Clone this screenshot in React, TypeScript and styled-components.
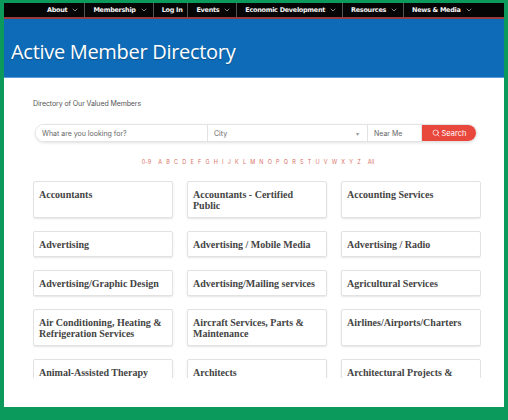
import React from "react"
import styled, { createGlobalStyle } from "styled-components"
import { ChevronDown, Search } from "lucide-react"

const navItems = [
  { label: "About", menu: true },
  { label: "Membership", menu: true },
  { label: "Log In", menu: false },
  { label: "Events", menu: true },
  { label: "Economic Development", menu: true },
  { label: "Resources", menu: true },
  { label: "News & Media", menu: true },
]

const letters = "ABCDEFGHIJKLMNOPQRSTUVWXYZ".split("")

const categories = [
  "Accountants",
  "Accountants - Certified Public",
  "Accounting Services",
  "Advertising",
  "Advertising / Mobile Media",
  "Advertising / Radio",
  "Advertising/Graphic Design",
  "Advertising/Mailing services",
  "Agricultural Services",
  "Air Conditioning, Heating & Refrigeration Services",
  "Aircraft Services, Parts & Maintenance",
  "Airlines/Airports/Charters",
  "Animal-Assisted Therapy",
  "Architects",
  "Architectural Projects & Design",
]

const GlobalStyle = createGlobalStyle`
  html, body {
    margin: 0;
    padding: 0;
    background: #fff;
  }
  * {
    box-sizing: border-box;
  }
`

const App: React.FC = () => {
  return (
    <>
      <GlobalStyle />
      <Frame>
        <TopNav>
          {navItems.map((item, i) => (
            <NavItem key={item.label} $first={i === 0}>
              {item.label}
              {item.menu && <ChevronDown size={8} strokeWidth={2} />}
            </NavItem>
          ))}
        </TopNav>
        <Banner>
          <Title>Active Member Directory</Title>
        </Banner>
        <Content>
          <Intro>Directory of Our Valued Members</Intro>
          <SearchBar>
            <Field $width={172}>What are you looking for?</Field>
            <Field $width={160}>
              City
              <Caret>▾</Caret>
            </Field>
            <Field $width={54}>Near Me</Field>
            <SearchButton>
              <Search size={8} strokeWidth={2.2} />
              Search
            </SearchButton>
          </SearchBar>
          <Alphabet>
            <Letter $wide>0-9</Letter>
            {letters.map((l) => (
              <Letter key={l}>{l}</Letter>
            ))}
            <Letter $wide>All</Letter>
          </Alphabet>
          <ListWindow>
            <CategoryGrid>
              {categories.map((c) => (
                <Card key={c}>{c}</Card>
              ))}
            </CategoryGrid>
          </ListWindow>
        </Content>
      </Frame>
    </>
  )
}

const Frame = styled.div`
  width: 508px;
  height: 420px;
  border-style: solid;
  border-color: #0b9a5c;
  border-width: 3px 4px 13px 4px;
  background: #fff;
  display: flex;
  flex-direction: column;
  overflow: hidden;
`

const TopNav = styled.nav`
  height: 16px;
  background: #050505;
  border-bottom: 2px solid #9b3a3a;
  display: flex;
  align-items: stretch;
  padding-left: 35px;
  flex-shrink: 0;
`

const NavItem = styled.div<{ $first?: boolean }>`
  display: flex;
  align-items: center;
  gap: 4px;
  padding: 0 5px 0 8px;
  color: #f4f4f4;
  font-family: "DejaVu Sans", sans-serif;
  font-size: 6.5px;
  font-weight: 600;
  letter-spacing: -0.3px;
  white-space: nowrap;
  border-left: ${(p) => (p.$first ? "none" : "1px solid #555")};

  svg {
    color: #ccc;
  }
`

const Banner = styled.header`
  height: 59px;
  background: #0d6bb7;
  border-bottom: 1px solid #5d9bd8;
  display: flex;
  align-items: center;
  padding: 6px 0 0 7px;
  flex-shrink: 0;
`

const Title = styled.h1`
  margin: 0;
  color: #fff;
  font-family: "Open Sans", sans-serif;
  font-size: 20px;
  font-weight: 400;
  letter-spacing: -0.3px;
  text-shadow: 0 1px 1px rgba(0, 0, 0, 0.25);
`

const Content = styled.main`
  width: 448px;
  margin-left: 29px;
  display: flex;
  flex-direction: column;
  align-items: stretch;
`

const Intro = styled.p`
  margin: 21px 0 0;
  color: #555;
  font-family: "Inter", sans-serif;
  font-size: 7px;
  line-height: 9px;
  letter-spacing: -0.1px;
`

const SearchBar = styled.div`
  margin: 16px 4px 0 2px;
  height: 18px;
  display: flex;
  border: 1px solid #e4e4e4;
  border-radius: 9px;
  box-shadow: 0 1px 3px rgba(0, 0, 0, 0.12);
  overflow: hidden;
`

const Field = styled.div<{ $width: number }>`
  width: ${(p) => p.$width}px;
  display: flex;
  align-items: center;
  justify-content: space-between;
  padding: 0 8px 0 6px;
  border-right: 1px solid #e2e2e2;
  color: #666;
  font-family: "Inter", sans-serif;
  font-size: 7px;
  background: #fff;
`

const Caret = styled.span`
  color: #999;
  font-size: 6px;
`

const SearchButton = styled.button`
  flex: 1;
  border: 0;
  margin: 0;
  padding: 0;
  background: #e8473c;
  color: #fff;
  font-family: "Inter", sans-serif;
  font-size: 7.5px;
  display: flex;
  align-items: center;
  justify-content: center;
  gap: 2px;
`

const Alphabet = styled.div`
  margin-top: 17px;
  display: flex;
  justify-content: center;
  gap: 4.2px;
  padding-left: 2px;
`

const Letter = styled.span<{ $wide?: boolean }>`
  color: #d9705f;
  font-family: "Inter", sans-serif;
  font-size: 5.5px;
  line-height: 7px;
  margin: ${(p) => (p.$wide ? "0 3px" : "0")};
`

const ListWindow = styled.div`
  margin-top: 15px;
  height: 197px;
  overflow: hidden;
`

const CategoryGrid = styled.div`
  display: grid;
  grid-template-columns: repeat(3, 140px);
  column-gap: 14px;
  row-gap: 13px;
`

const Card = styled.div`
  background: #fff;
  border: 1px solid #e2e2e2;
  border-radius: 2px;
  box-shadow: 0 1px 2px rgba(0, 0, 0, 0.1);
  padding: 7px 5px 6px 5px;
  color: #444;
  font-family: "Liberation Serif", serif;
  font-size: 10px;
  font-weight: 600;
  line-height: 11px;
`

export default App
